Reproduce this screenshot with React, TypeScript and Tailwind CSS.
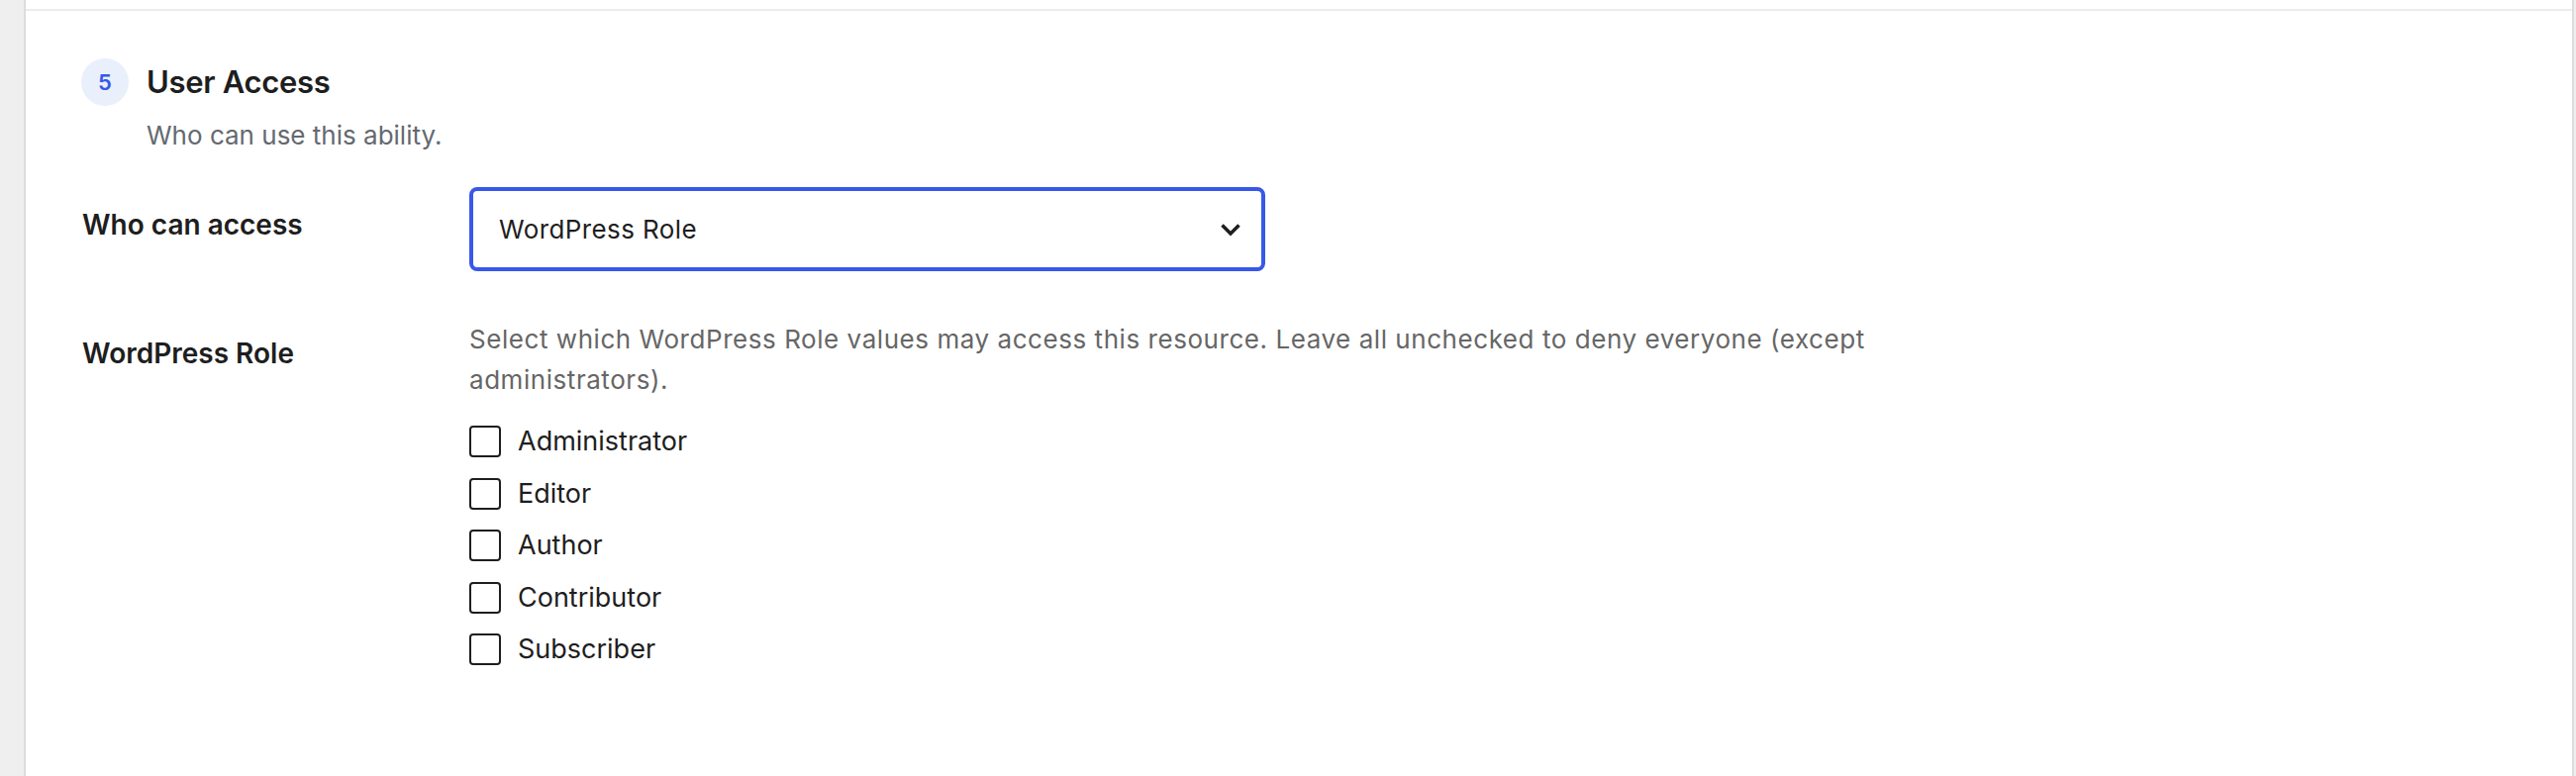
import { useState } from "react";

const ROLES = ["Administrator", "Editor", "Author", "Contributor", "Subscriber"];

const labelCls = "w-[391px] shrink-0 text-[28px] font-semibold leading-[40px] text-[#1e1e1e]";

function Chevron() {
  return (
    <svg width="22" height="14" viewBox="0 0 22 14" fill="none" className="shrink-0">
      <path d="M2.5 2.5 11 11l8.5-8.5" stroke="#1e1e1e" strokeWidth="3.5" />
    </svg>
  );
}

export default function App() {
  const [access, setAccess] = useState("WordPress Role");
  const [checked, setChecked] = useState<string[]>([]);

  const toggle = (r: string) =>
    setChecked((c) => (c.includes(r) ? c.filter((x) => x !== r) : [...c, r]));

  return (
    <div className="flex min-h-[784px] bg-[#efefef] pl-[24px] pr-[2px] font-['Inter',sans-serif]">
      <div className="flex flex-1 flex-col border-x-2 border-[#dcdcdc] bg-white pt-[9px]">
        <div className="h-[2px] bg-[#ececec]" />

        <section className="pl-[57px] pt-[48px]">
          <div className="-ml-[1px] flex h-[48px] items-center gap-[18px]">
            <span className="flex size-[48px] items-center justify-center rounded-full bg-[#e9f0fc] text-[22px] font-semibold text-[#3858e9]">
              5
            </span>
            <h2 className="text-[31px] font-semibold leading-[48px] tracking-[-0.3px] text-[#1e1e1e]">
              User Access
            </h2>
          </div>
          <p className="mt-[10px] pl-[65px] text-[26px] leading-[39px] text-[#646970]">Who can use this ability.</p>

          <div className="mt-[33px] flex">
            <div className={`${labelCls} pt-[18px]`}>Who can access</div>
            <button
              onClick={() => setAccess(access)}
              className="flex h-[85px] w-[804px] items-center justify-between rounded-[8px] border-[4px] border-[#3858e9] bg-white pl-[26px] pr-[20px] text-left text-[26px] tracking-[0.4px] text-[#1e1e1e]"
            >
              <span>{access}</span>
              <Chevron />
            </button>
          </div>

          <div className="mt-[48px] flex">
            <div className={`${labelCls} pt-[15px]`}>WordPress Role</div>
            <div className="flex flex-col">
              <p className="max-w-[1450px] text-[26px] leading-[41px] tracking-[0.55px] text-[#666666]">
                Select which WordPress Role values may access this resource. Leave all unchecked to deny everyone
                (except administrators).
              </p>
              <ul className="mt-[26px] flex flex-col gap-[20.5px]">
                {ROLES.map((r) => (
                  <li key={r}>
                    <label className="flex cursor-pointer items-center gap-[17px] text-[27px] leading-[32px] text-[#1e1e1e]">
                      <input
                        type="checkbox"
                        checked={checked.includes(r)}
                        onChange={() => toggle(r)}
                        className="size-[32px] appearance-none rounded-[4px] border-2 border-[#1e1e1e] bg-white checked:bg-[#3858e9]"
                      />
                      {r}
                    </label>
                  </li>
                ))}
              </ul>
            </div>
          </div>
        </section>
      </div>
    </div>
  );
}
